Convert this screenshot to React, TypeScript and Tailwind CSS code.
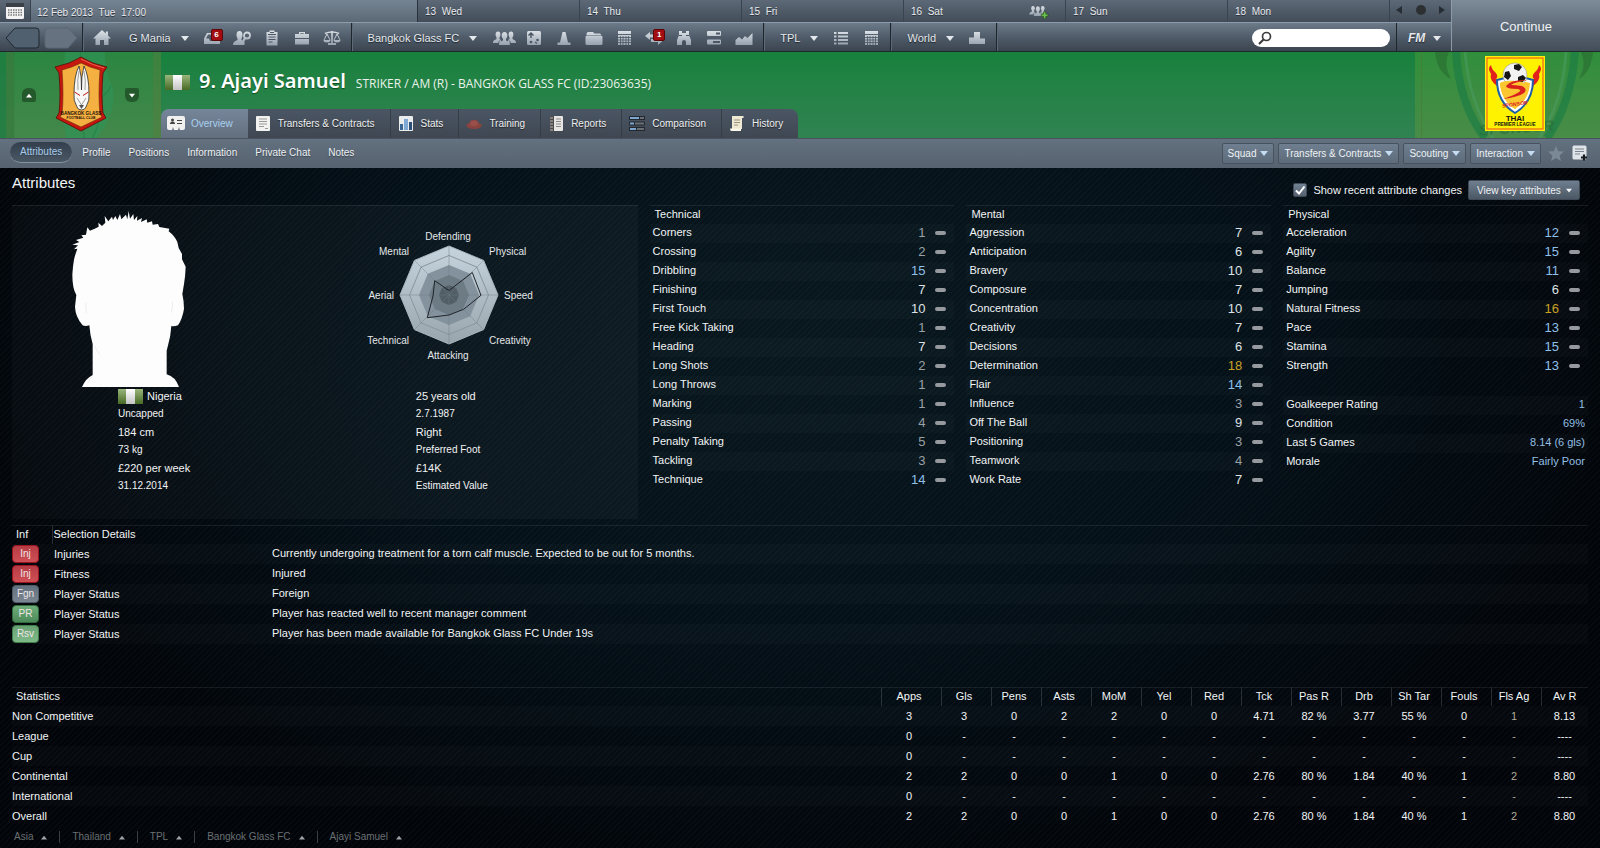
import type { ReactNode } from "react";

const FONT = "font-['Liberation_Sans',Arial,sans-serif]";

function Caret({ up = false, className = "" }: { up?: boolean; className?: string }) {
  return (
    <svg width="8" height="5" viewBox="0 0 8 5" className={className} aria-hidden="true">
      <path d={up ? "M0 5 L4 0 L8 5Z" : "M0 0 L8 0 L4 5Z"} fill="currentColor" />
    </svg>
  );
}

function Gradients() {
  return (
    <svg className="absolute size-0" aria-hidden="true">
      <defs>
        <linearGradient id="metal" x1="0" y1="0" x2="0" y2="18" gradientUnits="userSpaceOnUse">
          <stop offset="0.1" stopColor="#dde2e7" />
          <stop offset="1" stopColor="#8b98a6" />
        </linearGradient>
        <linearGradient id="flagGreen" x1="0" y1="0" x2="0" y2="1">
          <stop offset="0" stopColor="#9ab67c" />
          <stop offset="1" stopColor="#476a24" />
        </linearGradient>
        <linearGradient id="flagWhite" x1="0" y1="0" x2="0" y2="1">
          <stop offset="0" stopColor="#ffffff" />
          <stop offset="1" stopColor="#c3c3c3" />
        </linearGradient>
        <linearGradient id="radar" x1="0" y1="0" x2="0" y2="1">
          <stop offset="0" stopColor="#c6d4de" />
          <stop offset="1" stopColor="#98a5ad" />
        </linearGradient>
      </defs>
    </svg>
  );
}

function Glyph({ children, w = 18, h = 18 }: { children: ReactNode; w?: number; h?: number }) {
  return (
    <svg width={w} height={h} viewBox={`0 0 ${w} ${h}`} fill="url(#metal)" aria-hidden="true">
      {children}
    </svg>
  );
}

const D = "#4b5765";

const CalendarGrid = () => (
  <>
    <path d="M3 2h13v3H3z" />
    <path d="M3 6h13v10H3z" />
    <path d="M3 8.5h13M3 11h13M3 13.5h13M5.5 7v9M8 7v9M11 7v9M13.5 7v9" stroke={D} strokeWidth="0.8" />
  </>
);

const People = () => (
  <>
    <ellipse cx="5" cy="5.5" rx="2.4" ry="3" />
    <path d="M0 14c0-3 2-3 3.500-4V7h3v3c1 .5 2 1 2 4z" />
    <ellipse cx="18" cy="5.500" rx="2.400" ry="3" />
    <path d="M23 14c0-3-2-3-3.500-4V7h-3v3c-1 .5-2 1-2 4z" />
    <ellipse cx="11.500" cy="6.500" rx="2.800" ry="3.500" />
    <path d="M6 16c0-3.500 2.500-3.500 4-4.500V9h3v2.500c1.500 1 4 1 4 4.500z" />
    <path d="M7.500 11c-1.500 1-2 2-2 5M15.500 11c1.500 1 2 2 2 5" fill="none" stroke={D} strokeWidth="0.8" />
  </>
);

const icons: Record<string, ReactNode> = {
  home: <path d="M9 1 L0 9.500 H2.500 V16 H7 V11 H11 V16 H15.500 V9.500 H18 L15 6.600 V2.500 H12.800 V4.600 Z" />,
  inbox: (
    <path d="M1 9.500 L4 4 H14 L17 9.500 V15 H1Z M5 5.500 L3 9.500 H6 L7 12 H11 L12 9.500 H15 L13 5.500Z" fillRule="evenodd" />
  ),
  scout: (
    <>
      <ellipse cx="6.500" cy="6" rx="3" ry="4" />
      <path d="M0 16c0-3.500 3-4 4.500-5V8h4v3l3 2V16z" />
      <circle cx="14" cy="6.500" r="3" fill="none" stroke="url(#metal)" strokeWidth="1.800" />
      <path d="M12 9 L9 14.500" stroke="url(#metal)" strokeWidth="2.200" />
    </>
  ),
  clipboard: (
    <>
      <path d="M3.500 3H6.500V1.500H11.500V3H14.500V16.500H3.500Z" />
      <path d="M5 5.500h8M5.500 8h7M5.500 10.500h7M5.500 13h4" stroke={D} />
      <path d="M7 3.500h4" stroke={D} />
    </>
  ),
  briefcase: (
    <>
      <path d="M2 5H6V3H12V5H16V9H2Z M7.300 5H10.700V4.200H7.300Z" fillRule="evenodd" />
      <path d="M2 10H16V15.500H2Z" />
    </>
  ),
  scales: (
    <>
      <path d="M8.200 2h1.600v12H8.200zM5 14h8v2H5z" />
      <path d="M2 4.500Q9 1.500 16 4.500" fill="none" stroke="url(#metal)" strokeWidth="1.500" />
      <path d="M1 11L4 5L7 11M11 11L14 5L17 11" fill="none" stroke="url(#metal)" />
      <path d="M0.500 11h7a3.500 2.500 0 0 1-7 0zM10.500 11h7a3.500 2.500 0 0 1-7 0z" />
    </>
  ),
  people: <People />,
  tactics: (
    <>
      <rect x="2" y="2" width="14" height="14" rx="1.500" />
      <path d="M6 9V4M3.500 6.500L6 4L8.500 6.500" fill="none" stroke={D} strokeWidth="1.500" />
      <circle cx="6" cy="13" r="1.300" fill={D} />
      <circle cx="12.500" cy="11" r="1.300" fill={D} />
      <path d="M10 13l2 1.500" stroke={D} strokeWidth="1.300" />
    </>
  ),
  cone: <path d="M7.500 3h3L13 13.500H15.500V16H2.500V13.500H5Z" />,
  folder: (
    <>
      <path d="M1.500 5 Q1.500 3 3.500 3H8L9.500 4.500H15Q16 4.500 16 6H1.500Z" />
      <rect x="0.500" y="6.500" width="17" height="9.500" rx="1.500" />
    </>
  ),
  calendar: <CalendarGrid />,
  transfer: (
    <path d="M0 7 L5 3 V5.500 H14 V8.500 H5 V11Z M18 11.500 L13 7.500 V10 H6 V13 H13 V16Z" />
  ),
  binoculars: (
    <>
      <path d="M4 2h3v2h4V2h3v4l2 5v5h-5v-3a2 2 0 0 0-4 0v3H2v-5l2-5z" />
      <path d="M4 6.500h3M11 6.500h3" stroke={D} />
    </>
  ),
  servers: (
    <>
      <rect x="2" y="2" width="14" height="5" rx="1" />
      <rect x="2" y="10.500" width="14" height="5" rx="1" />
      <path d="M11 4.500h4M8 13h7" stroke={D} strokeWidth="1.800" />
    </>
  ),
  chart: <path d="M0.500 16V11L4 8L7 10.500L10 7L12.500 9L17.500 4V16Z" />,
  list: (
    <>
      <path d="M2 3h2.500v2H2zM2 6.500h2.500v2H2zM2 10h2.500v2H2zM2 13.500h2.500v2H2z" />
      <path d="M6 3h10v2H6zM6 6.500h10v2H6zM6 10h10v2H6zM6 13.500h10v2H6z" />
    </>
  ),
  podium: <path d="M1 8.500H6V3H12V9.500H17V15H1Z" />,
};

function Tool({ name, label, badge }: { name: string; label: string; badge?: string }) {
  return (
    <button type="button" aria-label={label} className="relative flex h-full w-[30px] items-center justify-center">
      <Glyph w={name === "people" ? 23 : 18}>{icons[name]}</Glyph>
      {badge && (
        <span className="absolute top-1 left-3.5 flex h-3 w-3 items-center justify-center rounded-xs border border-[#5d0508] bg-[#a30d12] text-[8px] font-bold text-white">
          {badge}
        </span>
      )}
    </button>
  );
}

function Menu({ label, className = "pl-4" }: { label: string; className?: string }) {
  return (
    <button
      type="button"
      aria-haspopup="menu"
      className={`flex h-full items-center gap-2.5 pr-2 text-[11px] font-medium text-[#e4e8ec] [text-shadow:0_1px_1px_#1d242b] ${className}`}
    >
      {label}
      <Caret />
    </button>
  );
}

const SEG = "flex h-full items-center border-r border-[#1d252d] pt-0.5 pr-1 shadow-[1px_0_0_#5d6a78]";

const days = ["13  Wed", "14  Thu", "15  Fri", "16  Sat", "17  Sun", "18  Mon"];

function TopBars() {
  return (
    <div className="flex border-b border-[#1c2a2a] bg-[#3d4753]">
      <div className="min-w-0 flex-1">
        <div className="flex h-[22px] bg-gradient-to-b from-[#5d6977] to-[#434d59] text-[10px] text-[#e9ecef] [text-shadow:0_1px_0_#2b323a]">
          <button type="button" aria-label="Calendar" className="flex w-[31px] items-center justify-center border-r border-[#39434e]">
            <svg width="18" height="16" viewBox="0 0 18 16" aria-hidden="true">
              <path d="M0 0h18v5H0z" fill="#3a4048" />
              <path d="M0 4h18v10.500a1.500 1.500 0 0 1-1.500 1.500h-15A1.500 1.500 0 0 1 0 14.500z" fill="#f3f3f3" />
              <path d="M2 7h14M2 9.500h14M2 12h14" stroke="#7a7a7a" strokeWidth="1.500" strokeDasharray="1.500 1" />
            </svg>
          </button>
          <div className="flex flex-1 items-center border-r border-[#2a323b] bg-gradient-to-b from-[#758493] to-[#5b6876] pt-0.5 pl-1.5 whitespace-pre">
            12 Feb 2013  Tue  17:00
          </div>
          {days.map((d) => (
            <div key={d} className="flex w-[162px] items-center justify-between border-r border-[#3a444f] pr-4 pl-[7px] whitespace-pre">
              {d}
              {d === "16  Sat" && (
                <svg width="20" height="15" viewBox="0 0 26 20" fill="url(#metal)" aria-label="Match">
                  <People />
                  <path d="M16 13.500h3v-3h3v3h3v3h-3v3h-3v-3h-3z" fill="#6cc24f" stroke="#1f4a16" strokeWidth="0.800" />
                </svg>
              )}
            </div>
          ))}
          <div className="flex w-[61px] items-center justify-between pr-1.5 pb-0.5 pl-1.5 text-[#262d35]">
            <button type="button" aria-label="Earlier">
              <svg width="6" height="8" viewBox="0 0 6 8"><path d="M6 0v8L0 4z" fill="currentColor" /></svg>
            </button>
            <button type="button" aria-label="Today" className="size-2.5 rounded-full bg-[#2d3032]" />
            <button type="button" aria-label="Later">
              <svg width="6" height="8" viewBox="0 0 6 8"><path d="M0 0v8l6-4z" fill="currentColor" /></svg>
            </button>
          </div>
        </div>
        <div className="flex h-[29px] items-center border-t border-[#8a9bab] bg-gradient-to-b from-[#6c7a89] via-[#505c6a] to-[#3b4550]">
          <div className={`${SEG} gap-1 pl-[5px]`}>
            <button type="button" aria-label="Back">
              <svg width="35" height="22" viewBox="0 0 35 22">
                <path d="M1 11L10 1H31Q34 1 34 4V18Q34 21 31 21H10Z" fill="#51606f" stroke="#1f2831" />
              </svg>
            </button>
            <button type="button" aria-label="Forward">
              <svg width="34" height="22" viewBox="0 0 34 22">
                <path d="M33 11L24 1H4Q1 1 1 4V18Q1 21 4 21H24Z" fill="#66727f" stroke="#5a6673" />
              </svg>
            </button>
          </div>
          <div className={`${SEG} pl-1`}>
            <Tool name="home" label="Home" />
            <Menu label="G Mania" className="pl-3" />
            <Tool name="inbox" label="Inbox" badge="6" />
            <Tool name="scout" label="Scouting" />
            <Tool name="clipboard" label="Notes" />
            <Tool name="briefcase" label="Job" />
            <Tool name="scales" label="Compare" />
          </div>
          <div className={SEG}>
            <Menu label="Bangkok Glass FC" className="mr-1 pl-4" />
            <Tool name="people" label="Squad" />
            <Tool name="tactics" label="Tactics" />
            <Tool name="cone" label="Training" />
            <Tool name="folder" label="Club" />
            <Tool name="calendar" label="Fixtures" />
            <Tool name="transfer" label="Transfers" badge="1" />
            <Tool name="binoculars" label="Scouts" />
            <Tool name="servers" label="Board" />
            <Tool name="chart" label="Finances" />
          </div>
          <div className={SEG}>
            <Menu label="TPL" />
            <Tool name="list" label="League table" />
            <Tool name="calendar" label="League fixtures" />
          </div>
          <div className={SEG}>
            <Menu label="World" />
            <Tool name="podium" label="Rankings" />
          </div>
          <div className="flex h-full flex-1 items-center justify-end border-r border-[#1d252d] pt-0.5 pr-1.5">
            <div className="flex h-[18px] w-[138px] items-center rounded-full bg-white pl-1.5">
              <svg width="14" height="14" viewBox="0 0 14 14" fill="none" stroke="#3d3d3d" aria-hidden="true">
                <circle cx="8.500" cy="5.500" r="4" strokeWidth="1.700" />
                <path d="M5.500 8.500L1 13" strokeWidth="2.200" />
              </svg>
              <input type="search" aria-label="Search" className="min-w-0 flex-1 bg-transparent px-1 text-[11px] text-black outline-none" />
            </div>
          </div>
          <button type="button" className="flex h-full w-[54px] items-center gap-2 pt-0.5 pl-[11px] text-[#e4e8ec]">
            <span className="text-[12px] font-black italic [text-shadow:0_1px_1px_#1d242b]">FM</span>
            <Caret />
          </button>
        </div>
      </div>
      <button
        type="button"
        className="w-[149px] border-l border-[#8d9aa8] bg-gradient-to-b from-[#7e8c9a] to-[#434d59] pt-0.5 text-[13px] text-[#eef1f4]"
      >
        Continue
      </button>
    </div>
  );
}

function Flag() {
  return (
    <svg width="25" height="15" viewBox="0 0 25 15" role="img" aria-label="Nigeria">
      <rect width="25" height="15" fill="url(#flagGreen)" />
      <rect x="8" width="9" height="15" fill="url(#flagWhite)" />
    </svg>
  );
}

function ClubCrest() {
  return (
    <svg width="54" height="76" viewBox="0 0 54 76" role="img" aria-label="Bangkok Glass">
      <path d="M27 1 Q38 8 53 11 L49 17 Q47 40 49 57 L52 62 L27 75 L2 62 L5 57 Q7 40 5 17 L1 11 Q16 8 27 1Z" fill="#c5160f" stroke="#5c0a08" strokeWidth="0.800" />
      <path d="M27 3 Q38 9 50 12" fill="none" stroke="#f0604f" />
      <path d="M27 7 Q37 12 46 14 Q44 40 46 58 L48 61 L27 71 L6 61 L8 58 Q10 40 8 14 Q17 12 27 7Z" fill="#f5b042" stroke="#6e2c09" strokeWidth="0.600" />
      <path d="M20 38 Q20 20 25 10 Q28 20 27.500 34 Q27 20 30 10 Q35 20 35 38 Q36 44 32 51 Q31 54 27.500 54 Q24 54 23 51 Q19 44 20 38Z" fill="#f8f8f6" stroke="#2a2a2a" strokeWidth="0.800" />
      <path d="M24 34 Q23 24 25 15 M31 34 Q32 24 30 15 M23 42 L27.500 49 L32 42" fill="none" stroke="#777" strokeWidth="0.700" />
      <path d="M20.500 36 L26 39.500 M34.500 36 L29 39.500" stroke="#c21812" strokeWidth="1" />
      <path d="M25 49 h5 l-2.500 4z" fill="#555" />
      <text x="27" y="59" textAnchor="middle" fontSize="4.600" fontWeight="bold" fill="#1c1206">BANGKOK GLASS</text>
      <text x="27" y="63" textAnchor="middle" fontSize="3.400" fontWeight="bold" fill="#1c1206">FOOTBALL CLUB</text>
    </svg>
  );
}

function LeagueCrest() {
  return (
    <svg width="60" height="75" viewBox="0 0 60 75" role="img" aria-label="Thai Premier League">
      <rect width="60" height="75" fill="#fff200" />
      <rect x="2" y="2" width="56" height="71" fill="none" stroke="#f26522" strokeWidth="1.200" />
      <path d="M12 30 Q4 24 6 18 Q2 12 6 9 Q7 14 10 16 Q14 20 11 23 Q15 25 12 30Z" fill="#e2211c" />
      <path d="M48 30 Q56 24 54 18 Q58 12 54 9 Q53 14 50 16 Q46 20 49 23 Q45 25 48 30Z" fill="#e2211c" />
      <path d="M12 24 Q30 18 48 24 Q48 46 30 57 Q12 46 12 24Z" fill="#fff" stroke="#1d5fa8" strokeWidth="2" />
      <path d="M15 27 Q30 22 45 27 Q44 44 30 53 Q16 44 15 27Z" fill="#fbc62f" />
      <circle cx="30" cy="19" r="12" fill="#f2f2f2" stroke="#888" strokeWidth="0.500" />
      <path d="M29 9l5-1 3 3-3 4-5-2zM20 16l4-1 2 5-3 4-4-3zM33 21l5-2 3 3-4 5-4-2z" fill="#151515" />
      <path d="M15 27 Q22 23 38 26 Q44 38 30 53 Q16 44 15 27Z" fill="#fbc62f" />
      <path d="M43 24 Q26 23 21 30 Q21 33 33 33 Q37 34 34 36 Q30 39 18 43 Q33 41 39 37 Q43 33 37 30 Q30 29 26 29 Q30 26 43 24Z" fill="#d9201c" />
      <text x="30" y="50" textAnchor="middle" fontSize="5.200" fontWeight="bold" fontStyle="italic" fill="#d9201c" transform="rotate(-8 30 50)">SPONSOR</text>
      <text x="30" y="65" textAnchor="middle" fontSize="8" fontWeight="900" fill="#111">THAI</text>
      <text x="30" y="70" textAnchor="middle" fontSize="4.600" fontWeight="900" fill="#111">PREMIER LEAGUE</text>
    </svg>
  );
}

const tabIcons: Record<string, ReactNode> = {
  Overview: (
    <svg width="18" height="15" viewBox="0 0 18 15">
      <path d="M2 0h14a2 2 0 0 1 2 2v10a2 2 0 0 1-2 2h-3l-1-3-1 3H7l-1-3-1 3H2a2 2 0 0 1-2-2V2a2 2 0 0 1 2-2z" fill="#f1f1f0" />
      <circle cx="5.500" cy="4" r="1.500" fill="#444" />
      <path d="M3 8q0-2.500 2.500-2.500T8 8zM10 4h5v1h-5zM10 7h5v1h-5z" fill="#444" />
    </svg>
  ),
  "Transfers & Contracts": (
    <svg width="14" height="15" viewBox="0 0 14 15">
      <rect width="14" height="15" rx="1" fill="#f2f2f0" />
      <path d="M3 3h8M3 5.500h8M3 8h8M3 10.500h5M9 12.500h3" stroke="#9a9a9a" />
    </svg>
  ),
  Stats: (
    <svg width="14" height="15" viewBox="0 0 14 15">
      <rect width="14" height="15" rx="1" fill="#e9ebec" />
      <path d="M1 8h3v6H1z" fill="#3b6797" />
      <path d="M5 3h4v11H5z" fill="#7fa8d4" />
      <path d="M10 6h3v8h-3z" fill="#2d4f78" />
    </svg>
  ),
  Training: (
    <svg width="16" height="10" viewBox="0 0 16 10">
      <path d="M0 6Q3 5 5 1.500Q8 0 11 1.500Q13 5 16 6Q15 10 8 10T0 6Z" fill="#8a4440" />
      <path d="M4 6q4 2 8 0l-1-4q-3-1-6 0z" fill="#9a4f4a" />
    </svg>
  ),
  Reports: (
    <svg width="13" height="15" viewBox="0 0 13 15">
      <rect width="13" height="15" rx="1" fill="#e8e6e2" />
      <rect width="4" height="15" fill="#4f4d4b" />
      <path d="M0 2h3M0 5h3M0 8h3M0 11h3M0 14h3" stroke="#b7b3ae" />
      <path d="M6 3h5M6 5.500h5M6 8h5M6 10.500h5" stroke="#8b8b8b" />
    </svg>
  ),
  Comparison: (
    <svg width="16" height="15" viewBox="0 0 16 15">
      <path d="M0 0h16v4H0zM0 5.500h16v4H0zM0 11h16v4H0z" fill="#23282e" />
      <path d="M1 1h9v2H1zM1 6.500h4v2H1zM1 12h6v2H1z" fill="#7ba7d2" />
      <path d="M11 1h4v2h-4zM6 6.500h9v2H6zM8 12h7v2H8z" fill="#6b7077" />
    </svg>
  ),
  History: (
    <svg width="14" height="15" viewBox="0 0 14 15">
      <path d="M2 0h11.500v2H12v11H2z" fill="#efe9d3" />
      <path d="M0 12.500h11v2.500H1.500Q0 15 0 12.500z" fill="#fdf9e8" />
      <path d="M4 4h6M4 6.500h6M4 9h4" stroke="#9c957c" />
    </svg>
  ),
};

const tabs = ["Overview", "Transfers & Contracts", "Stats", "Training", "Reports", "Comparison", "History"];

function PlayerHeader() {
  return (
    <header className="flex h-[86px] bg-gradient-to-b from-[#17813d] to-[#308351]">
      <div className="relative flex w-[161px] items-center justify-between overflow-hidden bg-gradient-to-b from-[#2a8640] to-[#43884b] px-[22px]">
        <svg className="absolute inset-0 size-full" viewBox="0 0 160 86" preserveAspectRatio="none" aria-hidden="true">
          <path d="M0 0H14V86H0Z" fill="#1b7b41" opacity="0.700" />
          <path d="M6 0H14V86H6Z" fill="#5e7b3b" opacity="0.350" />
          <path d="M152 0H160V86H152Z" fill="#5e7b3b" opacity="0.350" />
          <path d="M65 0 Q58 50 66 86 H96 Q116 62 112 36 Q104 18 104 0Z" fill="#2f9558" opacity="0.600" />
          <path d="M80 0 Q76 40 84 86M100 46Q108 40 110 34M102 48Q100 70 92 86" fill="none" stroke="#23834b" />
        </svg>
        <button type="button" aria-label="Previous player" className="relative flex size-3.5 items-center justify-center rounded-t-md rounded-b-xs bg-[#24592c] text-white">
          <Caret up className="w-1.5" />
        </button>
        <div className="relative pb-0.5">
          <ClubCrest />
        </div>
        <button type="button" aria-label="Next player" className="relative flex size-3.5 items-center justify-center rounded-t-xs rounded-b-md bg-[#24592c] text-white">
          <Caret className="w-1.5" />
        </button>
      </div>
      <div className="flex flex-1 flex-col justify-between">
        <div className="flex items-center gap-[9px] pt-[17px] pl-1">
          <Flag />
          <h1 className="flex items-baseline gap-2.5 font-['Open_Sans','Noto_Sans',sans-serif] leading-6 text-white">
            <span className="font-['Noto_Sans',sans-serif] text-[20px] font-semibold [text-shadow:0_1px_1px_#0d4a24]">9. Ajayi Samuel</span>
            <span className="text-[12px] text-[#eaf3ec]">STRIKER / AM (R) - BANGKOK GLASS FC (ID:23063635)</span>
          </h1>
        </div>
        <nav className="flex h-[29px] text-[10px] text-[#eef0f2]">
          {tabs.map((t, i) => (
            <a
              key={t}
              href="#"
              className={
                "flex items-center gap-1.5 pr-[15px] pl-1.5 " +
                (i === 0
                  ? "rounded-tl-lg bg-gradient-to-b from-[#76869a] to-[#626f7e] text-[#a9d0ef]"
                  : "border-r border-[#353d46] bg-gradient-to-b from-[#4b5665] to-[#3f4751] [text-shadow:0_1px_1px_#222] last:rounded-tr-lg last:border-r-0")
              }
            >
              <span className="flex w-[18px] justify-center">{tabIcons[t]}</span>
              {t}
            </a>
          ))}
        </nav>
      </div>
      <div className="relative flex w-[185px] items-start overflow-hidden bg-gradient-to-b from-[#308e3b] to-[#488c48] pt-1 pl-[70px]">
        <svg className="absolute inset-0 size-full" viewBox="0 0 185 86" preserveAspectRatio="none" aria-hidden="true">
          <path d="M6.500 0V86" stroke="#4b7a2f" opacity="0.600" />
          <path d="M20 0Q22 20 36 27Q28 12 34 0ZM178 0Q176 20 164 27Q172 12 166 0Z" fill="#286b30" opacity="0.600" />
          <path d="M41 0Q44 52 70 86M160 0Q156 52 132 86" fill="none" stroke="#1c7d45" strokeWidth="8" opacity="0.700" />
          <path d="M50 0Q54 50 78 86M151 0Q148 50 124 86" fill="none" stroke="#4b9d63" strokeWidth="3" opacity="0.500" />
          <text x="102" y="81" textAnchor="middle" fontSize="15" fontWeight="bold" fontStyle="italic" fill="#276d3a" opacity="0.600" transform="rotate(-4 102 81)">SPONSOR</text>
        </svg>
        <div className="relative">
          <LeagueCrest />
        </div>
      </div>
    </header>
  );
}

const subTabs = ["Profile", "Positions", "Information", "Private Chat", "Notes"];
const actions = ["Squad", "Transfers & Contracts", "Scouting", "Interaction"];

function SubNav() {
  return (
    <div className="flex h-[30px] items-center justify-between border-t border-[#49535f] bg-gradient-to-b from-[#637180] to-[#56626f] pr-3 pl-2.5 text-[10px] text-[#eef1f4]">
      <nav className="flex items-center gap-[18px] pb-[3px] [text-shadow:0_1px_1px_#3a434e]">
        <a href="#" className="-mr-2 rounded-full border-b border-[#8391a0] bg-gradient-to-b from-[#333f4c] to-[#4a5765] px-2.5 leading-5 text-[#a5cbea]">
          Attributes
        </a>
        {subTabs.map((t) => (
          <a key={t} href="#">{t}</a>
        ))}
      </nav>
      <div className="flex items-center gap-1 pb-px">
        {actions.map((a) => (
          <button
            key={a}
            type="button"
            aria-haspopup="menu"
            className="flex h-[21px] items-center gap-1 rounded-xs border border-[#465260] bg-gradient-to-b from-[#6f7f90] to-[#5d6b7a] px-[5px]"
          >
            {a}
            <Caret className="text-[#c5dcf2]" />
          </button>
        ))}
        <button type="button" aria-label="Shortlist" className="pl-[3px]">
          <svg width="16" height="15" viewBox="0 0 16 15">
            <path d="M8 0l2.200 5.200 5.800.4-4.400 3.800 1.400 5.600L8 12l-5 3 1.400-5.600L0 5.600l5.800-.4z" fill="#7b8997" />
          </svg>
        </button>
        <button type="button" aria-label="Add note" className="pl-1">
          <svg width="16" height="16" viewBox="0 0 16 16">
            <rect x="0.500" y="0.500" width="14" height="14" rx="1.500" fill="#dfe4e8" />
            <path d="M3 4h9M3 6.500h9M3 9h5" stroke="#7a8490" />
            <path d="M9 12.500h6M12 9.500v6" stroke="#161b20" strokeWidth="2.200" />
          </svg>
        </button>
      </div>
    </div>
  );
}

function Silhouette() {
  return (
    <svg width="114" height="176" viewBox="216 153 342 528" role="img" aria-label="Player portrait">
      <path
        d="M246 681 Q258 654 278 645 L278 552 Q270 525 268 496 Q256 500 248 496 Q226 470 225 440 L229 405 Q217 385 217 345 Q219 310 224 290 L232 266 L222 268 L234 256 L217 254 L238 246 L228 240 L250 233 L244 226 L258 224 L262 202 L270 212 L284 206 L296 200 L295 188 L306 198 L316 188 L314 168 L325 184 L336 170 L339 180 L346 168 L352 180 L360 162 L364 178 L378 164 L382 178 L386 153 L390 176 L400 162 L402 180 L412 168 L411 182 L426 174 L423 186 L440 178 L442 188 L456 184 L458 194 L474 192 L478 201 L508 206 L506 214 Q524 228 532 246 L536 264 L546 282 L546 298 L557 320 Q556 350 552 372 L547 402 Q552 424 552 446 Q548 474 534 496 Q522 500 514 498 Q512 528 505 552 L500 572 L500 643 Q526 650 537 681Z"
        fill="#fdfdfd"
      />
      <path d="M258 428 Q256 445 260 460M518 424 Q518 445 514 458M284 558 Q290 575 302 584M264 668 Q268 658 276 650" fill="none" stroke="#e6e6e6" strokeWidth="2" />
    </svg>
  );
}

const octagon = (r: number) =>
  [0, 1, 2, 3, 4, 5, 6, 7]
    .map((i) => {
      const a = (i * Math.PI) / 4;
      return `${(90 + r * Math.sin(a)).toFixed(1)},${(67 - r * Math.cos(a)).toFixed(1)}`;
    })
    .join(" ");

function Radar() {
  return (
    <svg width="180" height="136" viewBox="0 0 180 136" role="img" aria-label="Attribute summary" fontSize="10" fill="#e4e8ea">
      <polygon points={octagon(49)} fill="url(#radar)" stroke="#a9b7c1" />
      <polygon points={octagon(39.500)} fill="none" stroke="#8796a0" />
      <polygon points={octagon(30)} fill="#83929c" />
      <polygon points={octagon(20)} fill="#6d7b84" />
      <polygon points={octagon(10)} fill="#525e66" />
      <path d="M90 18V116M41 67H139M55.400 32.400L124.600 101.600M124.600 32.400L55.400 101.600" stroke="#6d7d88" strokeWidth="0.700" opacity="0.600" />
      <polygon points="90,62.500 113.300,44.500 122,67.300 104.600,81.300 90,87 68.300,89.700 74,68 75.700,52.700" fill="none" stroke="#20242a" />
      <text x="89" y="12" textAnchor="middle">Defending</text>
      <text x="130" y="27">Physical</text>
      <text x="145" y="71">Speed</text>
      <text x="130" y="116">Creativity</text>
      <text x="89" y="131" textAnchor="middle">Attacking</text>
      <text x="50" y="116" textAnchor="end">Technical</text>
      <text x="35" y="71" textAnchor="end">Aerial</text>
      <text x="50" y="27" textAnchor="end">Mental</text>
    </svg>
  );
}

function Facts({ rows, className }: { rows: ReactNode[]; className: string }) {
  return (
    <ul className={`leading-[18px] text-[#f2f4f5] ${className}`}>
      {rows.map((r, i) => (
        <li key={i} className={i % 2 ? "text-[10px]" : "flex items-center gap-1 text-[11px]"}>
          {r}
        </li>
      ))}
    </ul>
  );
}

function ProfilePanel() {
  return (
    <section className="grid h-[314px] grid-cols-2 grid-rows-[181px_1fr] border-t border-white/8 bg-gradient-to-r from-white/2 to-white/3">
      <div className="pt-[5px] pl-15">
        <Silhouette />
      </div>
      <div className="pt-[22px] pl-[34px]">
        <Radar />
      </div>
      <Facts
        className="pl-[106px]"
        rows={[<><Flag /> Nigeria</>, "Uncapped", "184 cm", "73 kg", "£220 per week", "31.12.2014"]}
      />
      <Facts
        className="pl-[91px]"
        rows={["25 years old", "2.7.1987", "Right", "Preferred Foot", "£14K", "Estimated Value"]}
      />
    </section>
  );
}

type Attr = [string, number];

const technical: Attr[] = [
  ["Corners", 1], ["Crossing", 2], ["Dribbling", 15], ["Finishing", 7], ["First Touch", 10],
  ["Free Kick Taking", 1], ["Heading", 7], ["Long Shots", 2], ["Long Throws", 1], ["Marking", 1],
  ["Passing", 4], ["Penalty Taking", 5], ["Tackling", 3], ["Technique", 14],
];
const mental: Attr[] = [
  ["Aggression", 7], ["Anticipation", 6], ["Bravery", 10], ["Composure", 7], ["Concentration", 10],
  ["Creativity", 7], ["Decisions", 6], ["Determination", 18], ["Flair", 14], ["Influence", 3],
  ["Off The Ball", 9], ["Positioning", 3], ["Teamwork", 4], ["Work Rate", 7],
];
const physical: Attr[] = [
  ["Acceleration", 12], ["Agility", 15], ["Balance", 11], ["Jumping", 6], ["Natural Fitness", 16],
  ["Pace", 13], ["Stamina", 15], ["Strength", 13],
];

function tone(v: number) {
  if (v > 15) return "text-[#c9a227]";
  if (v > 10) return "text-[#8fc0ea]";
  if (v > 5) return "text-[#dfe3e6]";
  return "text-[#9aa1a6]";
}

function AttributeTable({ title, rows }: { title: string; rows: Attr[] }) {
  return (
    <table className="w-full border-t border-white/8 leading-[17px]">
      <thead>
        <tr className="h-[18px] text-[11px]">
          <th colSpan={3} className="pl-[5px] text-left font-normal">{title}</th>
        </tr>
      </thead>
      <tbody>
        {rows.map(([name, value]) => (
          <tr key={name} className="h-[19px] odd:bg-white/2">
            <th scope="row" className="pb-0.5 pl-[3px] text-left text-[11px] font-normal">{name}</th>
            <td className={`pb-0.5 text-right text-[13px] ${tone(value)}`}>{value}</td>
            <td className="w-[29px] pl-2.5">
              <div className="h-1 w-[11px] rounded-full bg-[#96999e]" />
            </td>
          </tr>
        ))}
      </tbody>
    </table>
  );
}

const condition = [
  ["Goalkeeper Rating", "1"],
  ["Condition", "69%"],
  ["Last 5 Games", "8.14 (6 gls)"],
  ["Morale", "Fairly Poor"],
];

const selection = [
  ["Inj", "Injuries", "Currently undergoing treatment for a torn calf muscle. Expected to be out for 5 months."],
  ["Inj", "Fitness", "Injured"],
  ["Fgn", "Player Status", "Foreign"],
  ["PR", "Player Status", "Player has reacted well to recent manager comment"],
  ["Rsv", "Player Status", "Player has been made available for Bangkok Glass FC Under 19s"],
];

const badgeTone: Record<string, string> = {
  Inj: "border-[#9c1420] bg-gradient-to-b from-[#b63c45] to-[#cf4f55]",
  Fgn: "border-[#4f5b67] bg-gradient-to-b from-[#63707e] to-[#7b8792]",
  PR: "border-[#2f6b3b] bg-gradient-to-b from-[#6fae7b] to-[#4c8a59]",
  Rsv: "border-[#3f7d4b] bg-gradient-to-b from-[#68a173] to-[#80b989]",
};

function SelectionTable() {
  return (
    <table className="mt-1.5 w-full table-fixed border-t border-white/8 text-[11px]">
      <colgroup>
        <col className="w-10" />
        <col className="w-[218px]" />
        <col />
      </colgroup>
      <thead>
        <tr className="h-[18px] text-left leading-4">
          <th className="border-r border-white/15 pb-0.5 pl-1 font-normal">Inf</th>
          <th colSpan={2} className="pb-0.5 pl-px font-normal">Selection Details</th>
        </tr>
      </thead>
      <tbody>
        {selection.map(([code, topic, text], i) => (
          <tr key={i} className="h-5 leading-4 odd:bg-white/2">
            <td>
              <span className={`flex h-[18px] w-[27px] items-center justify-center rounded-[4px] border text-[10px] text-[#f0e6e6] ${badgeTone[code]}`}>
                {code}
              </span>
            </td>
            <td className="pl-0.5">{topic}</td>
            <td className="pb-[3px] pl-0.5">{text}</td>
          </tr>
        ))}
      </tbody>
    </table>
  );
}

const statCols = ["Apps", "Gls", "Pens", "Asts", "MoM", "Yel", "Red", "Tck", "Pas R", "Drb", "Sh Tar", "Fouls", "Fls Ag", "Av R"];
const blank = ["0", "-", "-", "-", "-", "-", "-", "-", "-", "-", "-", "-", "-", "----"];
const recent = ["2", "2", "0", "0", "1", "0", "0", "2.76", "80 %", "1.84", "40 %", "1", "2", "8.80"];
const stats: [string, string[]][] = [
  ["Non Competitive", ["3", "3", "0", "2", "2", "0", "0", "4.71", "82 %", "3.77", "55 %", "0", "1", "8.13"]],
  ["League", blank],
  ["Cup", blank],
  ["Continental", recent],
  ["International", blank],
  ["Overall", recent],
];

function StatsTable() {
  return (
    <table className="mt-[43px] w-full table-fixed border-t border-white/8 text-[11px]">
      <thead>
        <tr className="h-[18px] leading-4">
          <th className="pb-0.5 pl-1 text-left font-normal">Statistics</th>
          {statCols.map((c) => (
            <th key={c} className="w-[50px] border-l border-white/15 pr-1 pb-0.5 font-normal nth-2:w-[60px] last:w-[47px] last:pr-0">
              {c}
            </th>
          ))}
        </tr>
      </thead>
      <tbody>
        {stats.map(([name, cells]) => (
          <tr key={name} className="h-5 text-center odd:bg-white/2">
            <th scope="row" className="text-left font-normal">{name}</th>
            {cells.map((c, i) => (
              <td key={i} className={i === 12 ? "pr-1 text-[#b3a99b]" : "pr-1 last:pr-0"}>
                {c}
              </td>
            ))}
          </tr>
        ))}
      </tbody>
    </table>
  );
}

const crumbs = ["Asia", "Thailand", "TPL", "Bangkok Glass FC", "Ajayi Samuel"];

export default function App() {
  return (
    <div className={`flex min-h-screen flex-col bg-[#01060a] text-[#f2f4f5] ${FONT}`}>
      <Gradients />
      <TopBars />
      <PlayerHeader />
      <SubNav />
      <main className="flex-1 bg-[repeating-linear-gradient(135deg,rgba(255,255,255,0.025)_0px,rgba(255,255,255,0.025)_1px,transparent_2px,transparent_4px),radial-gradient(ellipse_at_50%_25%,#08171e_0%,#041018_40%,#01050a_75%)] px-3">
        <div className="flex h-[37px] items-start justify-between">
          <h2 className="pt-1.5 text-[15px] leading-[18px]">Attributes</h2>
          <div className="flex items-center gap-1.5 pt-3 pr-2">
            <label className="flex items-center gap-1.5 text-[11px] leading-5">
              <span className="relative flex">
                <input
                  type="checkbox"
                  defaultChecked
                  className="peer size-3.5 appearance-none rounded-xs border border-[#3f4a56] bg-gradient-to-b from-[#718193] to-[#55616f]"
                />
                <svg width="14" height="14" viewBox="0 0 14 14" className="pointer-events-none absolute inset-0 hidden peer-checked:block" aria-hidden="true">
                  <path d="M3 7.500l3 3 5.500-7" fill="none" stroke="#fff" strokeWidth="2" />
                </svg>
              </span>
              Show recent attribute changes
            </label>
            <div className="relative">
              <select
                aria-label="Attribute view"
                className="block h-5 w-28 appearance-none rounded-xs border border-[#3f4a56] bg-gradient-to-b from-[#6f7f90] to-[#4b5764] pl-2 text-[10px] text-[#eef1f4]"
              >
                <option>View key attributes</option>
              </select>
              <Caret className="pointer-events-none absolute top-2 right-2 w-1.5" />
            </div>
          </div>
        </div>
        <div className="grid grid-cols-[2fr_3fr] gap-3">
          <ProfilePanel />
          <div className="grid grid-cols-3 items-start gap-3">
            <AttributeTable title="Technical" rows={technical} />
            <AttributeTable title="Mental" rows={mental} />
            <div>
              <AttributeTable title="Physical" rows={physical} />
              <table className="mt-5 w-full text-[11px] leading-[17px]">
                <tbody>
                  {condition.map(([name, value]) => (
                    <tr key={name} className="h-[19px] odd:bg-white/2">
                      <th scope="row" className="pb-0.5 pl-[3px] text-left font-normal">{name}</th>
                      <td className="pr-[3px] pb-0.5 text-right text-[#93bfe2]">{value}</td>
                    </tr>
                  ))}
                </tbody>
              </table>
            </div>
          </div>
        </div>
        <SelectionTable />
        <StatsTable />
        <nav className="flex h-[22px] items-center text-[10px] text-[#6a6f72]">
          {crumbs.map((c) => (
            <a key={c} href="#" className="flex items-center gap-2 border-r border-[#3a3f43] px-3 leading-3 first:pl-0.5 last:border-r-0">
              {c}
              <Caret up className="w-1.5 text-[#9ea4a8]" />
            </a>
          ))}
        </nav>
      </main>
    </div>
  );
}
